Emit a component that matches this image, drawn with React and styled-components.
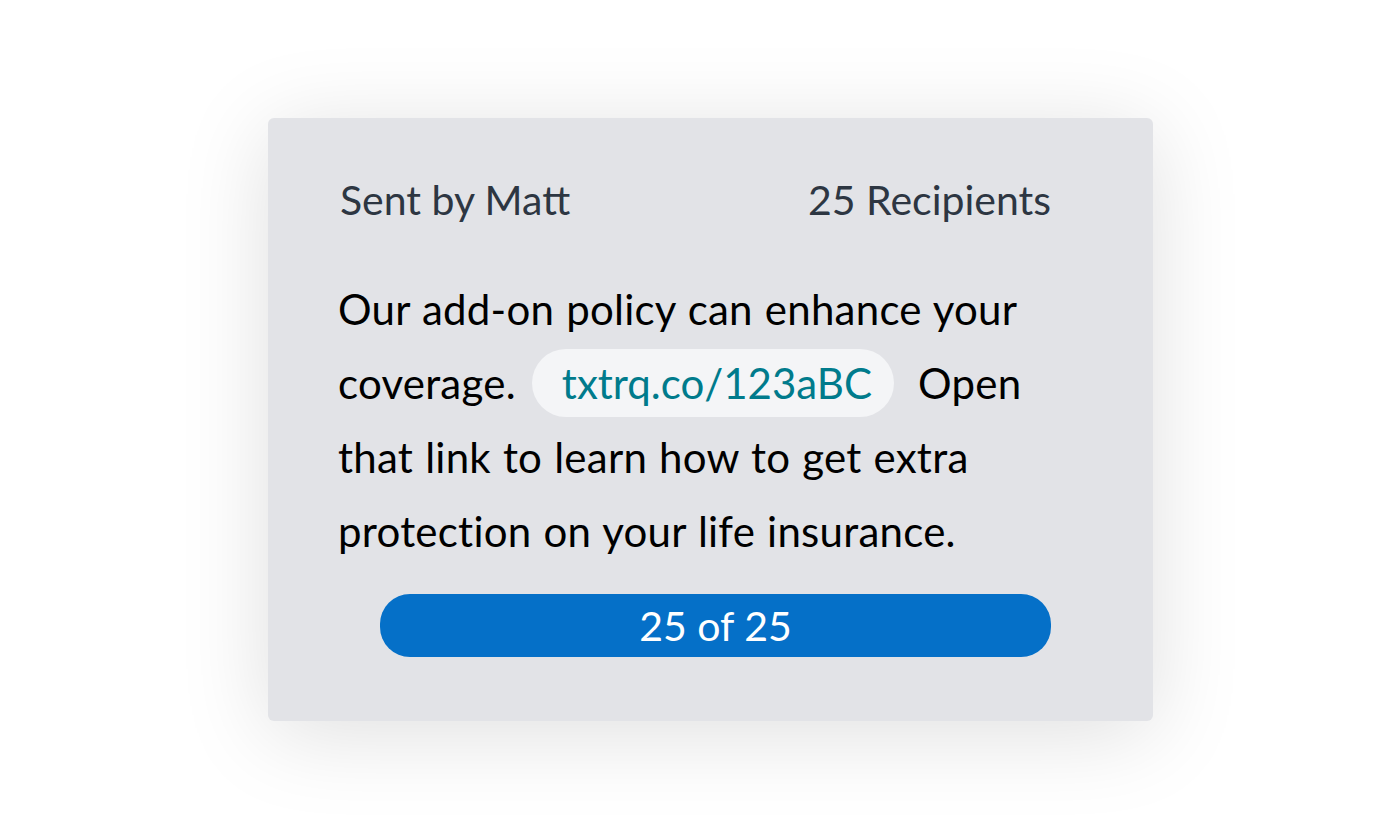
import React from "react";
import styled, { createGlobalStyle } from "styled-components";

const Global = createGlobalStyle`
  html, body {
    margin: 0;
    padding: 0;
    background: #ffffff;
  }
  body {
    font-family: Lato, "Noto Sans", sans-serif;
  }
`;

const Page = styled.div`
  width: 1390px;
  height: 834px;
  padding: 118px 0 0 268px;
  box-sizing: border-box;
`;

const Card = styled.div`
  width: 885px;
  height: 603px;
  box-sizing: border-box;
  padding: 58px 100px 0 72px;
  background: #e2e3e7;
  border-radius: 6px;
  box-shadow: 0 12px 90px rgba(0, 0, 0, 0.13);
  display: flex;
  flex-direction: column;
`;

const Header = styled.div`
  display: flex;
  justify-content: space-between;
  align-items: baseline;
  font-size: 41px;
  line-height: 48px;
  color: #2d3642;
  margin-right: 2px;
`;

const Message = styled.p`
  margin: 48px 0 0 -2px;
  font-size: 42px;
  line-height: 74px;
  letter-spacing: 0.25px;
  word-spacing: 1px;
  color: #000000;
`;

const Link = styled.span`
  display: inline-block;
  margin: 0 12px 0 4px;
  padding: 0 22px 0 30px;
  height: 68px;
  line-height: 68px;
  border-radius: 34px;
  background: #f4f5f7;
  color: #007b8c;
  letter-spacing: 0;
`;

const Progress = styled.div`
  margin: 26px 2px 0 40px;
  height: 63px;
  border-radius: 30px;
  background: #0570c8;
  color: #ffffff;
  font-size: 41px;
  display: flex;
  align-items: center;
  justify-content: center;
`;

export default function App() {
  return (
    <Page>
      <Global />
      <Card>
        <Header>
          <span>Sent by Matt</span>
          <span>25 Recipients</span>
        </Header>
        <Message>
          Our add-on policy can enhance your coverage. <Link>txtrq.co/123aBC</Link> Open that link to
          learn how to get extra protection on your life insurance.
        </Message>
        <Progress>25 of 25</Progress>
      </Card>
    </Page>
  );
}
